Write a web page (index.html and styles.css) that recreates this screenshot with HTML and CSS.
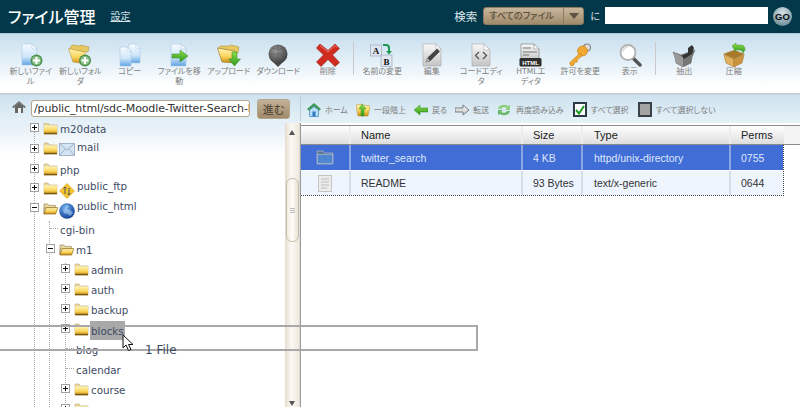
FILE: index.html
```html
<!DOCTYPE html>
<html lang="ja">
<head>
<meta charset="utf-8">
<title>ファイル管理</title>
<link rel="stylesheet" href="styles.css">
</head>
<body>
<svg class="defs" width="0" height="0" aria-hidden="true">
  <defs>
    <linearGradient id="gFold" x1="0" y1="0" x2="0" y2="1"><stop offset="0" stop-color="#fff3b8"/><stop offset=".55" stop-color="#fbd65c"/><stop offset="1" stop-color="#c88a14"/></linearGradient>
    <linearGradient id="gDoc" x1="0" y1="0" x2="0" y2="1"><stop offset="0" stop-color="#f6fbff"/><stop offset=".6" stop-color="#cfe6fa"/><stop offset="1" stop-color="#5fa4e4"/></linearGradient>
    <linearGradient id="gGray" x1="0" y1="0" x2="0" y2="1"><stop offset="0" stop-color="#f8f8f8"/><stop offset="1" stop-color="#c4c4c4"/></linearGradient>
    <linearGradient id="gGreen" x1="0" y1="0" x2="0" y2="1"><stop offset="0" stop-color="#8fdc4a"/><stop offset="1" stop-color="#2c9a1e"/></linearGradient>
    <radialGradient id="gBall" cx=".4" cy=".35" r=".75"><stop offset="0" stop-color="#9a9a9a"/><stop offset="1" stop-color="#333"/></radialGradient>
    <radialGradient id="gGlobe" cx=".4" cy=".3" r=".8"><stop offset="0" stop-color="#6fb0f0"/><stop offset="1" stop-color="#0b348c"/></radialGradient>
    <symbol id="folder" viewBox="0 0 15 13"><path d="M1 3V1.600Q1 1 1.600 1H5l1.400 2H14v9H1z" fill="#e9d9a0" stroke="#a89460" stroke-width=".5"/><rect x="1" y="3.500" width="13" height="8.600" fill="url(#gFold)"/><rect x="1" y="10.800" width="13" height="1.400" fill="#7a5a10"/></symbol>
    <symbol id="folderopen" viewBox="0 0 15 13"><path d="M1 12V2h4l1 1.400h6.400V6H1z" fill="#e8d7a0" stroke="#8f7a48" stroke-width=".6"/><path d="M1 12L3.200 5.600H14.800L12.600 12z" fill="url(#gFold)" stroke="#8f6a18" stroke-width=".7"/></symbol>
    <symbol id="plusbadge" viewBox="0 0 12 12"><circle cx="6" cy="6" r="5.500" fill="#4d8f4a"/><circle cx="6" cy="6" r="4.200" fill="#8cc48a"/><path d="M6 2.800v6.400M2.800 6h6.400" stroke="#fff" stroke-width="2"/></symbol>
  </defs>
</svg>
<div class="app">
  <header class="topbar">
    <h1 class="title">ファイル管理</h1>
    <a class="settings" href="#">設定</a>
    <div class="search">
      <span class="search-label">検索</span>
      <div class="select"><span class="select-text">すべてのファイル</span><span class="select-arrow"></span></div>
      <span class="search-in">に</span>
      <input class="search-input" type="text" aria-label="検索">
      <span class="go">GO</span>
    </div>
  </header>

  <nav class="toolbar">
    <div class="tool"><svg class="ti" viewBox="0 0 24 24"><path d="M3 1h10l5 5v16H3z" fill="url(#gDoc)" stroke="#a9c6e4" stroke-width=".6"/><path d="M13 1v5h5z" fill="#fff" stroke="#9db8d4" stroke-width=".5"/><use href="#plusbadge" x="11" y="11" width="13" height="13"/></svg><span>新しいファイ<br>ル</span></div>
    <div class="tool"><svg class="ti" viewBox="0 0 24 24"><path d="M1 7L4 2l8 1 1-1 8 2-1 5z" fill="#e8c860" stroke="#a98a30" stroke-width=".5"/><path d="M0.500 5.500L17 9l2 12-14-2z" fill="url(#gFold)" stroke="#b08a30" stroke-width=".5"/><use href="#plusbadge" x="10.500" y="11" width="13" height="13"/></svg><span>新しいフォル<br>ダ</span></div>
    <div class="tool"><svg class="ti" viewBox="0 0 24 24"><path d="M11 1h7l4 4v15H11z" fill="url(#gDoc)" stroke="#a9c6e4" stroke-width=".6"/><path d="M18 1v4h4z" fill="#fff" stroke="#9db8d4" stroke-width=".4"/><path d="M2 4h7l4 4v15H2z" fill="url(#gDoc)" stroke="#a9c6e4" stroke-width=".6"/><path d="M9 4v4h4z" fill="#fff" stroke="#9db8d4" stroke-width=".4"/></svg><span>コピー</span></div>
    <div class="tool"><svg class="ti" viewBox="0 0 24 24"><path d="M4 1h10l5 5v17H4z" fill="url(#gDoc)" stroke="#a9c6e4" stroke-width=".6"/><path d="M14 1v5h5z" fill="#fff" stroke="#9db8d4" stroke-width=".5"/><path d="M5 11h8V7l8 6-8 6v-4H5z" fill="url(#gGreen)" stroke="#2d8a20" stroke-width=".5"/></svg><span>ファイルを移<br>動</span></div>
    <div class="tool"><svg class="ti" viewBox="0 0 24 24"><path d="M1 6L3 3l9 0 2-1 8 2-1 6z" fill="#e8c860" stroke="#a98a30" stroke-width=".5"/><path d="M0.500 5L18 8l1 12-14-1z" fill="url(#gFold)" stroke="#8c6d20" stroke-width=".6"/><path d="M15 9h5v7h3.500L17.500 23 11.500 16H15z" fill="url(#gGreen)" stroke="#2d8a20" stroke-width=".5"/></svg><span>アップロード</span></div>
    <div class="tool"><svg class="ti" viewBox="0 0 24 24"><path d="M5 17h14l-7 7z" fill="#4a4a4a"/><circle cx="12" cy="11" r="9.500" fill="url(#gBall)"/><path d="M3 11h18M12 2v18M6 5q6 3 12 0M6 17q6-3 12 0" stroke="#555" stroke-width=".5" fill="none"/></svg><span>ダウンロード</span></div>
    <div class="tool"><svg class="ti" viewBox="0 0 24 24"><path d="M4 1l8 6.500L19 1l4.500 4.500L16.500 12l7 7.500L19 23.500 12 16.500 5 23.500 .5 19l7-7L.5 5z" fill="#cf2b1f" stroke="#9c1c14" stroke-width=".6"/><path d="M4 2.500l8 6.500 7-6.500 2 2" fill="none" stroke="#ef7a6c" stroke-width="1"/></svg><span>削除</span></div>
    <div class="tool-sep"></div>
    <div class="tool"><svg class="ti" viewBox="0 0 24 24"><rect x="0.500" y="2" width="11" height="11" fill="#dfe6f2" stroke="#9aa6bc" stroke-width=".7"/><text x="6" y="11" class="svgt">A</text><rect x="11" y="12" width="11" height="11.500" fill="#dfe6f2" stroke="#9aa6bc" stroke-width=".7"/><text x="16.500" y="21.500" class="svgt">B</text><path d="M13 2h3q3 0 3 3v4" fill="none" stroke="#1f9a52" stroke-width="2"/><path d="M16 8h6l-3 3.500z" fill="#1f9a52"/></svg><span>名前の変更</span></div>
    <div class="tool"><svg class="ti" viewBox="0 0 24 24"><path d="M3 1h13l5 5v17H3z" fill="url(#gGray)" stroke="#aaa" stroke-width=".6"/><path d="M16 1v5h5z" fill="#fff" stroke="#999" stroke-width=".5"/><path d="M6 19l1.500-4L17 6l2.500 2.500-9.500 9.500z" fill="#444" stroke="#222" stroke-width=".5"/><path d="M6 19l1.500-4 2.500 3z" fill="#bbb"/></svg><span>編集</span></div>
    <div class="tool"><svg class="ti" viewBox="0 0 24 24"><path d="M3 1h12l6 6v16H3z" fill="url(#gGray)" stroke="#aaa" stroke-width=".6"/><path d="M15 1v6h6z" fill="#fff" stroke="#999" stroke-width=".5"/><path d="M10 9l-3.500 3.500L10 16M14 9l3.500 3.500L14 16" fill="none" stroke="#555" stroke-width="1.300"/></svg><span>コードエディ<br>タ</span></div>
    <div class="tool"><svg class="ti" viewBox="0 0 24 24"><path d="M2 1h13l5 5v12H2z" fill="url(#gGray)" stroke="#777" stroke-width=".6"/><path d="M15 1v5h5z" fill="#fff" stroke="#777" stroke-width=".5"/><path d="M4 5h8M4 9h14M4 12h6" stroke="#777" stroke-width="1"/><rect x="0.500" y="15" width="22" height="8.500" rx="1.500" fill="#2e2e2e"/><text x="11.500" y="22" class="svgh">HTML</text></svg><span>HTMLエ<br>ディタ</span></div>
    <div class="tool"><svg class="ti" viewBox="0 0 24 24"><circle cx="19" cy="4.500" r="3.500" fill="#ddd" stroke="#888" stroke-width="1.200"/><circle cx="14.500" cy="8" r="5" fill="#f0a830" stroke="#c47e10" stroke-width=".6"/><path d="M11.500 10.500L1.500 20l1.500 3 3-1 .5-2.500 2.500-.5.500-2.500 5-4z" fill="#f0a830" stroke="#c47e10" stroke-width=".6"/></svg><span>許可を変更</span></div>
    <div class="tool"><svg class="ti" viewBox="0 0 24 24"><path d="M15 15l7 7" stroke="#555" stroke-width="3.500" stroke-linecap="round"/><circle cx="10" cy="9.500" r="7.500" fill="#fff" stroke="#b0b0b0" stroke-width="1.800"/><path d="M5 9a5 5 0 0 1 5-5" stroke="#ddd" stroke-width="1.500" fill="none"/></svg><span>表示</span></div>
    <div class="tool-sep"></div>
    <div class="tool"><svg class="ti" viewBox="0 0 24 24"><path d="M1 9l8 3 14-5-3 7-1 6-8 4-7-4-1-6z" fill="#777" stroke="#555" stroke-width=".5"/><path d="M9 13l7-3 0-5 4-3 2 3-2 6-8 5z" fill="#333"/><path d="M1 9l10 5 0 10-7-4z" fill="#999"/></svg><span>抽出</span></div>
    <div class="tool"><svg class="ti" viewBox="0 0 24 24"><path d="M1 11l11-4 11 4-11 5z" fill="#a97a2c"/><path d="M2 12l10 4v8l-8-4z" fill="#e2b15c" stroke="#9c7020" stroke-width=".5"/><path d="M22 12l-10 4v8l8-4z" fill="#cc9440" stroke="#9c7020" stroke-width=".5"/><path d="M10 3l4-3v2h5q4 0 4 5l-2 3q0-3-4-3h-3v2z" fill="url(#gGreen)" stroke="#2d8a20" stroke-width=".4"/></svg><span>圧縮</span></div>
  </nav>

  <div class="pathbar">
    <div class="path-left">
      <svg class="home-small" viewBox="0 0 14 12"><path d="M7 0L0 6l1.500 1L3 6v6h8V6l1.500 1L14 6z" fill="#666"/><rect x="6" y="7" width="3" height="5" fill="#eee"/><path d="M2 5L7 1l5 4" fill="none" stroke="#999" stroke-width=".8"/></svg>
      <input class="path-input" type="text" value="/public_html/sdc-Moodle-Twitter-Search-block" aria-label="パス">
      <span class="path-go">進む</span>
    </div>
    <div class="path-sep"></div>
    <div class="crumb crumb-home"><svg class="ci" viewBox="0 0 14 14"><path d="M7 0L0 6l1.500 1.500L2.500 7v6.500h9V7l1 .5L14 6z" fill="#3d9c52"/><path d="M2.500 7L7 3.500 11.500 7v6.500h-9z" fill="#b8dcf5" stroke="#3f80c4" stroke-width=".6"/><rect x="5.500" y="8.500" width="3" height="5" fill="#2f78c8"/></svg><span>ホーム</span></div>
    <div class="crumb crumb-up"><svg class="ci" viewBox="0 0 14 14"><path d="M0 2l6-1 1 1 7 1-2 10-10 0z" fill="url(#gFold)" stroke="#b08a30" stroke-width=".5"/><path d="M6 1L10 6H8V13H5V6H3z" fill="url(#gGreen)" stroke="#2d8a20" stroke-width=".4"/></svg><span>一段階上</span></div>
    <div class="crumb crumb-back"><svg class="ci" viewBox="0 0 14 14"><path d="M0 7l6-5v3h8v4H6v3z" fill="url(#gGreen)" stroke="#2d8a20" stroke-width=".5"/></svg><span>戻る</span></div>
    <div class="crumb crumb-fwd"><svg class="ci" viewBox="0 0 14 14"><path d="M14 7L8 2v3H0v4h8v3z" fill="url(#gGray)" stroke="#666" stroke-width=".8"/></svg><span>転送</span></div>
    <div class="crumb crumb-reload"><svg class="ci ci-wide" viewBox="0 0 14 14"><path d="M1 6a6 5 0 0 1 10-3l2-1v5H8l2-2a4 3.500 0 0 0-6 1z" fill="#8fd07a"/><path d="M13 8a6 5 0 0 1-10 3l-2 1V7h5l-2 2a4 3.500 0 0 0 6-1z" fill="#6cb86a"/></svg><span>再度読み込み</span></div>
    <div class="crumb crumb-all"><span class="check check-on"><svg viewBox="0 0 10 10" class="tick"><path d="M1 5l3 3.500L9 1" fill="none" stroke="#1c9a22" stroke-width="2"/></svg></span><span>すべて選択</span></div>
    <div class="crumb crumb-none"><span class="check check-off"></span><span>すべて選択しない</span></div>
  </div>

  <main class="main">
    <section class="tree-pane">
      <div class="tree">
        <i class="guide g1"></i><i class="guide g2"></i><i class="guide g3"></i>
        <div class="row l1"><b class="exp"></b><svg class="fold"><use href="#folder"/></svg><span class="lbl">m20data</span></div>
        <div class="row l1 h21"><b class="exp"></b><svg class="fold"><use href="#folder"/></svg><svg class="badge badge-mail" viewBox="0 0 16 16"><path d="M.5 1.500h15v12H.5z" fill="#d5e4f2" stroke="#8ea6c0" stroke-width=".8"/><path d="M.5 1.500L8 8l7.500-6.500M.5 13.500L6 7M15.500 13.500L10 7" fill="none" stroke="#8ea6c0" stroke-width=".8"/></svg><span class="lbl lbl-up">mail</span></div>
        <div class="row l1"><b class="exp"></b><svg class="fold"><use href="#folder"/></svg><span class="lbl">php</span></div>
        <div class="row l1 h18"><b class="exp"></b><svg class="fold"><use href="#folder"/></svg><svg class="badge" viewBox="0 0 16 16"><path d="M8 .5L15.500 8 8 15.500.5 8z" fill="#f5c530" stroke="#d0a020" stroke-width=".6"/><path d="M6 4v7M4.500 5.500L6 4l1.500 1.500M10 12V5M8.500 10.500L10 12l1.500-1.500" fill="none" stroke="#555" stroke-width="1"/></svg><span class="lbl lbl-up">public_ftp</span></div>
        <div class="row l1 h22"><b class="exp open"></b><svg class="fold"><use href="#folderopen"/></svg><svg class="badge" viewBox="0 0 16 16"><circle cx="8" cy="8" r="7.800" fill="url(#gGlobe)"/><path d="M7 2l3 1-2 3 3 1 3 3-3 3-2-2-4-1-1-3 2-1z" fill="#b9d8f6" opacity=".55"/></svg><span class="lbl lbl-up">public_html</span></div>
        <div class="row l2 leaf"><i class="dots"></i><span class="lbl">cgi-bin</span></div>
        <div class="row l2"><b class="exp open"></b><svg class="fold"><use href="#folderopen"/></svg><span class="lbl">m1</span></div>
        <div class="row l3"><b class="exp"></b><svg class="fold"><use href="#folder"/></svg><span class="lbl">admin</span></div>
        <div class="row l3"><b class="exp"></b><svg class="fold"><use href="#folder"/></svg><span class="lbl">auth</span></div>
        <div class="row l3"><b class="exp"></b><svg class="fold"><use href="#folder"/></svg><span class="lbl">backup</span></div>
        <div class="row l3"><b class="exp"></b><svg class="fold"><use href="#folder"/></svg><span class="lbl lbl-hl">blocks</span></div>
        <div class="row l3 leaf"><i class="dots"></i><span class="lbl">blog</span></div>
        <div class="row l3 leaf"><i class="dots"></i><span class="lbl">calendar</span></div>
        <div class="row l3"><b class="exp"></b><svg class="fold"><use href="#folder"/></svg><span class="lbl">course</span></div>
        <div class="row l3"><b class="exp"></b><svg class="fold"><use href="#folder"/></svg><span class="lbl"></span></div>
      </div>
      <div class="scroll">
        <span class="arrow-up"></span>
        <span class="thumb"><i></i><i></i><i></i></span>
        <span class="arrow-down"></span>
      </div>
    </section>
    <section class="files">
      <div class="thead">
        <div class="c c0 th"></div><div class="c c1 th">Name</div><div class="c c2 th">Size</div><div class="c c3 th">Type</div><div class="c c4 th">Perms</div>
      </div>
      <div class="tbody">
        <div class="tr sel">
          <div class="c c0"><svg class="ficon" viewBox="0 0 18 15"><path d="M1 14V1h6l1.500 2H17v11z" fill="#5f7898" stroke="#a9b4c4" stroke-width=".8"/><rect x="1.500" y="4.500" width="15" height="9" fill="#4f86cf" stroke="#b8c4d4" stroke-width=".6"/></svg></div>
          <div class="c c1">twitter_search</div><div class="c c2">4 KB</div><div class="c c3">httpd/unix-directory</div><div class="c c4">0755</div>
        </div>
        <div class="tr">
          <div class="c c0"><svg class="ficon" viewBox="0 0 18 17"><rect x="2.500" y=".5" width="13" height="16" fill="#ececec" stroke="#c4c4c4"/><path d="M5 4h8M5 7h8M5 10h8M5 13h6" stroke="#bbb" stroke-width="1.200"/></svg></div>
          <div class="c c1">README</div><div class="c c2">93 Bytes</div><div class="c c3">text/x-generic</div><div class="c c4">0644</div>
        </div>
      </div>
    </section>
  </main>

  <div class="drag"></div>
  <span class="drag-label">1 File</span>
  <svg class="cursor" viewBox="0 0 13 18"><path d="M1 1v13l3-3 2.500 5.500 2.500-1L6.500 10.500H11z" fill="#fff" stroke="#111" stroke-width="1"/></svg>
</div>
</body>
</html>
```
FILE: styles.css
```css
* { box-sizing: border-box; }
html, body { margin: 0; padding: 0; }
body {
  width: 800px;
  height: 407px;
  overflow: hidden;
  background: #fff;
  font-family: "Noto Sans CJK JP", "Liberation Sans", sans-serif;
  font-feature-settings: "palt";
}
.defs { position: absolute; }
.app { position: relative; display: flex; flex-direction: column; width: 800px; height: 407px; overflow: hidden; }

/* top bar */
.topbar {
  display: flex; align-items: center; flex: none;
  height: 34px; padding: 0 8px 2px 8px;
  background: #02384a;
  border-bottom: 1px solid #a9cbdc;
}
.title { margin: 0; font-size: 16px; line-height: 20px; font-weight: 500; color: #fff; }
.settings { margin-left: 15px; font-size: 10px; color: #d6e2e8; text-decoration: underline; }
.search { display: flex; align-items: center; margin-left: auto; }
.search-label { font-size: 11.500px; color: #dfe8ec; }
.select {
  display: flex; align-items: center; width: 101px; height: 18px; margin-left: 6px;
  border-radius: 3px; border: 1px solid #8f7c60;
  background: linear-gradient(#c9b79d, #a08a6b);
}
.select-text { flex: 1; padding-left: 5px; font-size: 9px; color: #5a4c38; font-weight: 500; }
.select-arrow { position: relative; flex: none; width: 20px; height: 100%; border-left: 1px solid #8f7c60; }
.select-arrow::after {
  content: ""; position: absolute; left: 5px; top: 5px;
  border: 5px solid transparent; border-top: 6px solid #5e5444; border-bottom: 0;
}
.search-in { margin-left: 6px; font-size: 10px; color: #dfe8ec; }
.search-input { width: 163px; height: 17px; margin-left: 5px; padding: 0; border: 0; background: #fff; }
.go {
  display: flex; align-items: center; justify-content: center;
  width: 19px; height: 19px; margin: 2px 0 0 5px; border-radius: 50%;
  background: radial-gradient(circle at 50% 30%, #d7e4e8, #6f8f9a 80%);
  font: bold 9.500px "Liberation Sans", sans-serif; color: #0c0c0c;
}

/* toolbar */
.toolbar {
  display: flex; flex: none; align-items: flex-start;
  height: 61px; padding: 9px 0 0 6px;
  background: linear-gradient(#c8dfee 0, #e6f1f8 30px, #ffffff 52px);
  border-bottom: 2px solid #c4d2da;
}
.tool {
  display: flex; flex-direction: column; align-items: center; flex: none;
  width: 49.500px; font-size: 8px; line-height: 10px; color: #7d7d7d; text-align: center;
}
.ti { display: block; width: 24px; height: 24px; margin-bottom: -1px; }
.svgt { font: bold 9px "Liberation Serif", serif; fill: #111; text-anchor: middle; }
.svgh { font: bold 6px "Liberation Sans", sans-serif; fill: #fff; text-anchor: middle; }
.tool-sep { flex: none; width: 1px; height: 33px; margin: -1px 4px 0 0; background: #c9c9c9; }

/* path bar */
.pathbar {
  display: flex; align-items: center; flex: none;
  height: 28px; padding-bottom: 1px;
  background: linear-gradient(#cde2ef, #e6f1f8);
  font-size: 8px; color: #7d7d7d;
}
.path-left { display: flex; align-items: center; flex: none; width: 300px; padding-left: 12px; }
.home-small { flex: none; width: 14px; height: 12px; margin-top: -4px; }
.path-input {
  flex: none; width: 219px; height: 17px; margin-left: 5px; padding: 0 0 0 2px;
  border: 1px solid #b5a68e; border-radius: 3px; background: #fff;
  font: 11px/15px "DejaVu Sans", sans-serif; letter-spacing: -.12px; color: #333;
}
.path-go {
  display: flex; align-items: center; justify-content: center; flex: none;
  width: 33px; height: 20px; margin-left: 7px; border-radius: 3px;
  background: linear-gradient(#c4b297, #a08a6b); border: 1px solid #b5a68e;
  font-size: 11px; color: #4a3e2e;
}
.path-sep { flex: none; width: 1px; height: 25px; background: #c2ced6; }
.crumb { display: flex; align-items: center; flex: none; margin-top: 2px; }
.ci { flex: none; width: 14px; height: 14px; margin-right: 4px; }
.ci-wide { margin-right: 5px; }
.crumb-home { margin-left: 6px; }
.crumb-up { margin-left: 8px; }
.crumb-back { margin-left: 8px; }
.crumb-fwd { margin-left: 8px; }
.crumb-reload { margin-left: 8px; }
.crumb-all { margin-left: 9px; }
.crumb-none { margin-left: 9px; }
.check { display: flex; align-items: center; justify-content: center; flex: none; width: 14px; height: 15px; margin-right: 4px; border: 2px solid #2c3a48; }
.check-on { background: #fff; }
.check-off { background: #a4a4a4; border-color: #3a4048; }
.tick { width: 10px; height: 10px; }

/* main */
.main { display: flex; flex: 1; min-height: 0; }
.tree-pane { display: flex; flex: none; width: 300px; overflow: hidden; background: linear-gradient(#e4eff6 0, #ffffff 32px); }
.tree { position: relative; flex: 1; margin-top: -4px; font: 10.300px "DejaVu Sans", sans-serif; color: #3d4a63; }
.row { display: flex; align-items: center; height: 20px; }
.h21 { height: 21px; }
.h18 { height: 18px; }
.h22 { height: 22px; }
.l1 { padding-left: 30px; }
.l2 { padding-left: 46px; }
.l3 { padding-left: 61px; }
.leaf.l2 { padding-left: 50px; }
.leaf.l3 { padding-left: 66px; }
.exp {
  position: relative; flex: none; width: 9px; height: 9px; margin: -3px 4px 0 0;
  border: 1px solid #a0a0a0; background: #fff;
}
.exp::before { content: ""; position: absolute; left: 1px; top: 3px; width: 5px; height: 1px; background: #111; }
.exp::after { content: ""; position: absolute; left: 3px; top: 1px; width: 1px; height: 5px; background: #111; }
.exp.open::after { display: none; }
.fold { flex: none; width: 15px; height: 13px; margin: -2px 2px 0 0; }
.badge { flex: none; width: 16px; height: 16px; margin: 3px 2px 0 -1px; }
.badge-mail { margin-top: 0; }
.lbl { line-height: 14px; }
.lbl-up { margin-top: -6px; }
.lbl-hl { margin-left: -1px; padding: 3px 1px 2px 1px; background: #a9a9a9; }
.dots { flex: none; width: 8px; height: 0; margin: -3px 2px 0 0; border-top: 1px dotted #aaa; }
.guide { position: absolute; width: 0; border-left: 1px dotted #aaa; }
.g1 { left: 34px; top: 0; height: 300px; }
.g2 { left: 49px; top: 102px; height: 200px; }
.g3 { left: 65px; top: 144px; height: 150px; }
.scroll {
  position: relative; flex: none; width: 15px;
  background: linear-gradient(90deg, #e6dccd, #fbf9f5 45%, #efe8dc);
  border-right: 1px solid #ddd;
}
.arrow-up { position: absolute; left: 4px; top: 7px; border: 3px solid transparent; border-bottom: 5px solid #555; border-top: 0; }
.arrow-down { position: absolute; left: 4px; bottom: 1px; border: 3px solid transparent; border-top: 5px solid #555; border-bottom: 0; }
.thumb {
  position: absolute; left: 1px; top: 55px; width: 13px; height: 64px;
  display: flex; flex-direction: column; align-items: center; justify-content: center; gap: 1px;
  border: 1px solid #c8bca8; border-radius: 6px;
  background: linear-gradient(90deg, #f3ede2, #fffdf9 50%, #e9e1d3);
}
.thumb i { display: block; width: 5px; height: 1px; background: #bbb; }

/* file list */
.files { flex: 1; padding-top: 2px; border-left: 1px solid #9a9a9a; }
.thead { display: flex; height: 20px; padding-right: 16px; background: #f4f4f4; border-top: 1px solid #8c8c8c; border-bottom: 1px solid #8c8c8c; }
.tbody { width: 483px; border-bottom: 1px dotted #444; border-right: 1px dotted #444; }
.tr { display: flex; height: 25px; background: #eef5ff; color: #333; }
.tr + .tr { border-top: 1px solid #fff; }
.sel { background: #416dd6; color: #dfe8fb; }
.c {
  display: flex; align-items: center; flex: none; height: 100%;
  padding-left: 10px; border-right: 2px solid #d6dde6;
  font: 10.500px "Liberation Sans", sans-serif;
}
.sel .c { border-right-color: #8aa5e4; }
.th { background: linear-gradient(#ffffff, #dedede); color: #222; font-size: 11px; border-right-color: #eee; }
.c0 { width: 50px; padding-left: 0; justify-content: center; }
.c1 { width: 172px; }
.c2 { width: 60px; }
.c3 { width: 148px; padding-left: 11px; }
.c4 { width: 53px; padding-left: 10px; border-right: 0; }
.ficon { display: block; width: 18px; height: 17px; }

/* drag proxy */
.drag { position: absolute; left: -4px; top: 325px; width: 482px; height: 26px; border: 2px solid #a9a9a9; }
.drag-label { position: absolute; left: 145px; top: 342px; font: 12px/16px "DejaVu Sans", sans-serif; color: #3d4a63; }
.cursor { position: absolute; left: 122px; top: 334px; width: 13px; height: 18px; }
```
